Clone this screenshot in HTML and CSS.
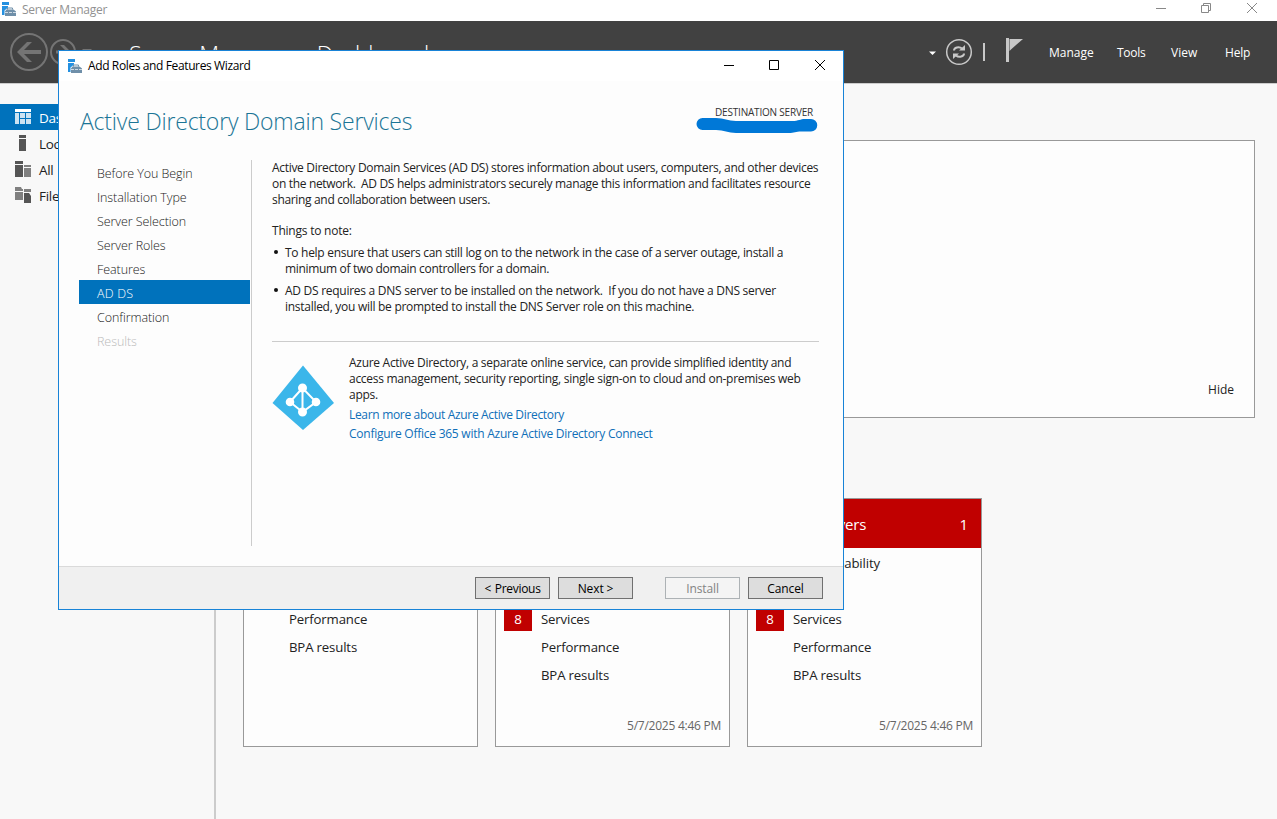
FILE: index.html
```html
<!DOCTYPE html>
<html lang="en">
<head>
<meta charset="utf-8">
<title>Server Manager</title>
<link rel="stylesheet" href="styles.css">
</head>
<body>
<svg width="0" height="0" class="defs">
  <symbol id="server-icon" viewBox="0 0 15 15">
    <path fill="#2490e0" d="M0 0h7v3H0zM0 4h6v1.500L2.500 8.500V13H0z"/>
    <path fill="none" stroke="#6f8fa9" d="M5.500 7.500V6h5v1.500"/>
    <path fill="#6f8fa9" d="M4.500 7.500h7l2.500 2v4.500H3V9.500z"/>
    <path stroke="#e8eef3" stroke-width=".8" d="M3 10.500h3M7 10.500h3M11 10.500h3"/>
  </symbol>
</svg>
<div class="app">
  <header class="titlebar">
    <svg class="title-icon" width="15" height="15"><use href="#server-icon"/></svg>
    <span class="app-title">Server Manager</span>
    <svg class="app-controls" width="104" height="16" viewBox="0 0 104 16" fill="none" stroke="#888">
      <path d="M0 8.500h10M45.500 5.500h7v7h-7zM47.500 5v-1.500h7v7H53M91 3l10 10M101 3L91 13"/>
    </svg>
  </header>
  <nav class="banner">
    <svg class="nav-arrows" width="92" height="42" viewBox="0 0 92 42" fill="none" stroke="#747474">
      <circle cx="19" cy="21" r="18" stroke-width="2"/>
      <path d="M7 21L17 11h5l-8 8h17v4H14l8 8h-5z" fill="#747474" stroke="none"/>
      <circle cx="53" cy="21" r="12" stroke-width="2"/>
      <path d="M61 21l-7-7h-4l5.500 5.500H46v3h9.500L50 28h4z" fill="#747474" stroke="none"/>
      <path d="M72 18h10l-5 5z" fill="#747474" stroke="none"/>
    </svg>
    <span class="crumbs">Server Manager <i class="crumb-arrow"></i> Dashboard</span>
    <svg class="banner-tools" width="96" height="30" viewBox="0 0 96 30">
      <path fill="#fff" d="M0 14.500h7l-3.500 3.500z"/>
      <circle cx="30" cy="15" r="12.300" fill="none" stroke="#c8c8c8" stroke-width="1.500"/>
      <path fill="none" stroke="#c8c8c8" stroke-width="2" d="M25 13.500c0-3 5-4.500 8-2M35 16.500c0 3-5 4.500-8 2"/>
      <path fill="#c8c8c8" d="M36 8v5.500h-6zM24 22v-5.500h6z"/>
      <path fill="#c8c8c8" d="M54 6h2v18h-2zM77 1h3v24h-3zM80.500 2H94L82.500 12l-2 2z"/>
    </svg>
    <span class="menu m1">Manage</span><span class="menu m2">Tools</span><span class="menu m3">View</span><span class="menu m4">Help</span>
  </nav>
  <div class="workspace">
    <aside class="sidebar">
      <div class="side-item active"><svg width="17" height="16" fill="#fff"><path d="M0 0h16v3H0z"/><path opacity=".8" d="M0 4h4v11H0zM5 4h5v5H5zM11 4h5v5h-5zM5 10h5v5H5zM11 10h5v5h-5z"/></svg><span>Dashboard</span></div>
      <div class="side-item"><svg width="17" height="16" fill="#555"><path d="M4 0h7v3H4zM4 4h7v12H4z"/></svg><span>Local Server</span></div>
      <div class="side-item"><svg width="17" height="16"><path fill="#555" d="M0 0h8v3H0zM0 4h8v12H0z"/><path fill="#808080" d="M9 4h7v2H9zM9 7h7v9H9z"/></svg><span>All&nbsp; Servers</span></div>
      <div class="side-item"><svg width="17" height="16"><path fill="#808080" d="M0 0h6l1 2h1v2H0zM0 5h8v8H0zM9 2h7v3H9z"/><path fill="#555" d="M9 6h5l2 3v7H9z"/></svg><span>File and Storage</span></div>
    </aside>
    <main class="content">
      <section class="welcome"><span class="hide-link">Hide</span></section>
      <section class="tiles">
        <article class="tile">
          <div class="tile-head"></div>
          <div class="row"></div><div class="row"></div>
          <div class="row"><span>Performance</span></div>
          <div class="row"><span>BPA results</span></div>
        </article>
        <article class="tile">
          <div class="tile-head alert"></div>
          <div class="row"></div><div class="row"></div>
          <div class="row"><b class="badge">8</b><span>Services</span></div>
          <div class="row"><span>Performance</span></div>
          <div class="row"><span>BPA results</span></div>
          <time class="stamp">5/7/2025 4:46 PM</time>
        </article>
        <article class="tile">
          <div class="tile-head alert"><span>All Servers</span><span class="count">1</span></div>
          <div class="row"><span class="mng">Manageability</span></div><div class="row"></div>
          <div class="row"><b class="badge">8</b><span>Services</span></div>
          <div class="row"><span>Performance</span></div>
          <div class="row"><span>BPA results</span></div>
          <time class="stamp">5/7/2025 4:46 PM</time>
        </article>
      </section>
    </main>
  </div>
</div>

<div class="wizard" role="dialog">
  <header class="wizard-bar">
    <svg width="15" height="15"><use href="#server-icon"/></svg>
    <span class="wizard-title">Add Roles and Features Wizard</span>
    <svg class="wizard-controls" width="102" height="12" viewBox="0 0 102 12" fill="none" stroke="#000">
      <path d="M0 6.500h10M45.500 1.500h9v9h-9zM91 1l10 10M101 1L91 11"/>
    </svg>
  </header>
  <div class="wizard-head">
    <h1>Active Directory Domain Services</h1>
    <div class="destination">
      <span class="dest-label">DESTINATION SERVER</span>
      <svg width="122" height="17" viewBox="0 0 122 17"><path fill="#0078d7" d="M6.500 1H20c8 0 12 3 20 3h56c7 0 8-2 13-2h6a6 6 0 0 1 0 12.500h-10c-5 0-7 1.500-12 1.500H40c-8 0-12-3-20-3H6.500a6 6 0 0 1 0-12z"/></svg>
    </div>
  </div>
  <div class="wizard-body">
    <ul class="steps">
      <li>Before You Begin</li><li>Installation Type</li><li>Server Selection</li><li>Server Roles</li><li>Features</li><li class="current">AD DS</li><li>Confirmation</li><li class="disabled">Results</li>
    </ul>
    <div class="details">
      <p><span class="l1">Active Directory Domain Services (AD DS) stores information about users, computers, and other devices</span><br><span class="l2">on the network.&nbsp; AD DS helps administrators securely manage this information and facilitates resource</span><br><span class="l3">sharing and collaboration between users.</span></p>
      <p class="note"><span class="l4">Things to note:</span></p>
      <ul class="notes">
        <li><span class="l5">To help ensure that users can still log on to the network in the case of a server outage, install a</span><br><span class="l6">minimum of two domain controllers for a domain.</span></li>
        <li><span class="l7">AD DS requires a DNS server to be installed on the network.&nbsp; If you do not have a DNS server</span><br><span class="l8">installed, you will be prompted to install the DNS Server role on this machine.</span></li>
      </ul>
      <div class="azure">
        <svg width="63" height="66" viewBox="0 0 63 66">
          <path fill="#3bb6ea" d="M31 .5L62 38 31 65 .5 38z"/>
          <path fill="none" stroke="#fff" stroke-width="2" d="M30.500 23L18 37l12.500 10L44 37zM30.500 23v24"/>
          <path fill="#fff" d="M35 23a4.500 4.500 0 1 0-9 0 4.500 4.500 0 1 0 9 0M22.300 37a4.300 4.300 0 1 0-8.600 0 4.300 4.300 0 1 0 8.600 0M48.300 37a4.300 4.300 0 1 0-8.600 0 4.300 4.300 0 1 0 8.600 0M35 47a4.500 4.500 0 1 0-9 0 4.500 4.500 0 1 0 9 0"/>
        </svg>
        <div class="azure-text">
          <p><span class="l9">Azure Active Directory, a separate online service, can provide simplified identity and</span><br><span class="l10">access management, security reporting, single sign-on to cloud and on-premises web</span><br><span class="l11">apps.</span></p>
          <a class="link"><span class="l12">Learn more about Azure Active Directory</span></a>
          <a class="link"><span class="l13">Configure Office 365 with Azure Active Directory Connect</span></a>
        </div>
      </div>
    </div>
  </div>
  <footer class="wizard-foot">
    <button class="previous">&lt; Previous</button><button>Next &gt;</button><button class="install" disabled>Install</button><button>Cancel</button>
  </footer>
</div>
</body>
</html>
```

FILE: styles.css
```css
* { box-sizing: border-box; }
body { margin: 0; width: 1277px; height: 819px; overflow: hidden; position: relative; font: 12px/16px "Open Sans", "Noto Sans", sans-serif; color: #222; white-space: nowrap; }
p, ul, h1 { margin: 0; padding: 0; list-style: none; }
svg { flex: none; display: block; }
.defs { position: absolute; }
.app { height: 819px; display: flex; flex-direction: column; background: #f8f8f8; }

.titlebar { height: 21px; display: flex; align-items: flex-start; background: #fff; color: #919191; padding: 2px 0 0 2px; }
.app-title { margin-left: 5px; letter-spacing: -.32px; font-size: 12px; }
.title-icon + .app-title { letter-spacing: -.25px; }
.app-controls { margin: -2px 17px 0 auto; }
.banner { height: 63px; display: flex; background: #414141; color: #fff; border-bottom: 1px solid #ccc; padding-left: 10px; }
.nav-arrows { margin-top: 10px; }
.crumbs { margin: 17px 0 0 27px; width: 803px; font: 300 23px/32px "Open Sans"; letter-spacing: -.3px; }
.crumb-arrow { display: inline-block; margin: 0 6px 3px 6px; border: 5px solid transparent; border-left-color: #fff; border-right: 0; }
.banner-tools { margin: 16px 0 0 -3px; }
.menu { line-height: 20px; margin-top: 22px; flex: none; }
.m1 { margin-left: 24px; width: 68px; }
.m2 { width: 54px; letter-spacing: -.3px; }
.m3 { width: 54px; }
.m4 { letter-spacing: -.2px; }

.workspace { flex: 1; display: flex; min-height: 0; }
.sidebar { width: 216px; padding-top: 20px; border-right: 2px solid #ccc; }
.side-item { height: 26px; display: flex; align-items: center; padding: 0 0 0 15px; gap: 7px; font-size: 13.500px; }
.side-item span { padding-top: 1px; letter-spacing: -.3px; }
.active { background: #0072bc; color: #fff; }
.content { flex: 1; padding: 56px 22px 0 27px; }
.welcome { height: 278px; border: 1px solid #999; background: #fdfdfd; display: flex; justify-content: flex-end; align-items: flex-end; padding: 0 20px 19px; }
.tiles { display: flex; gap: 17px; margin-top: 80px; }
.tile { width: 235px; height: 249px; border: 1px solid #999; background: #fdfdfd; display: flex; flex-direction: column; font-size: 13.200px; letter-spacing: -.15px; }
.tile-head { height: 49px; flex: none; display: flex; justify-content: space-between; align-items: center; padding: 1px 13px 0 47px; font-size: 15px; color: #fff; }
.alert { background: #c00000; }
.tile-head + .row { margin-top: 1px; }
.row { height: 28px; flex: none; display: flex; align-items: center; padding-left: 45px; }
.mng { padding-left: 3px; }
.badge { width: 28px; height: 22px; margin: 2px 9px 0 -37px; background: #c00000; color: #fff; font-weight: 400; text-align: center; line-height: 20px; }
.stamp { margin: 29px 8px 0 auto; font-size: 12px; letter-spacing: -.25px; color: #666; }

.wizard { position: absolute; left: 58px; top: 50px; width: 786px; height: 560px; border: 1px solid #1883d7; background: #fdfdfd; display: flex; flex-direction: column; color: #222; }
.wizard-bar { height: 30px; background: #fff; display: flex; align-items: center; padding: 0 17px 0 9px; color: #000; }
.wizard-title { margin-left: 5px; letter-spacing: -.38px; }
.wizard-controls { margin: -2px 0 0 auto; }
.wizard-head { height: 79px; display: flex; justify-content: space-between; padding: 24px 25px 0 21px; flex: none; }
h1 { font: 300 23px/32px "Open Sans"; letter-spacing: -.2px; color: #1b7596; }
.destination { display: flex; flex-direction: column; align-items: flex-end; font-size: 10px; line-height: 16px; color: #333; }
.dest-label { margin: -1px 5px 0 0; letter-spacing: -.2px; }
.destination svg { margin-top: -3px; }
.wizard-body { display: flex; height: 386px; flex: none; padding-left: 20px; }
.steps { width: 173px; border-right: 1px solid #ccc; font: 300 12.500px/24px "Open Sans"; letter-spacing: -.08px; }
.steps li { padding: 2px 0 0 18px; width: 171px; height: 24px; line-height: 24px; }
.steps .current { background: #0072bc; color: #fff; letter-spacing: .2px; }
.steps .disabled { color: #bbb; }
.details { width: 547px; margin-left: 20px; }
.l1 { letter-spacing: -.31px; }
.l2, .l3, .l6 { letter-spacing: -.33px; }
.l4 { letter-spacing: -.22px; }
.l5, .l9, .l11 { letter-spacing: -.29px; }
.l7 { letter-spacing: -.27px; }
.l8, .l10 { letter-spacing: -.28px; }
.l12 { letter-spacing: -.32px; }
.l13 { letter-spacing: -.25px; }
.note { margin-top: 15px; }
.notes { margin-top: 6px; }
.notes li { padding-left: 13px; margin-bottom: 6px; position: relative; }
.notes li::before { content: ""; position: absolute; left: 2px; top: 5px; width: 4px; height: 4px; border-radius: 2px; background: #111; }
.azure { margin-top: 26px; border-top: 1px solid #ccc; display: flex; gap: 14px; }
.azure > svg { margin-top: 23px; }
.azure-text { padding-top: 13px; }
.link { display: block; color: #0f6fb8; margin-top: 4px; height: 15px; }
.wizard-foot { margin-top: auto; height: 43px; background: #f0f0f0; border-top: 1px solid #dadada; display: flex; gap: 8px; justify-content: flex-end; padding: 10px 20px 0; }
button { width: 75px; height: 22px; border: 1px solid #707070; background: #ddd; color: #000; font: 12px/18px "Open Sans"; padding: 2px 0 0; letter-spacing: -.1px; }
.previous { letter-spacing: -.3px; word-spacing: 1px; }
.install { margin-left: 24px; background: #f4f4f4; color: #838383; border-color: #adb2b5; }
```
